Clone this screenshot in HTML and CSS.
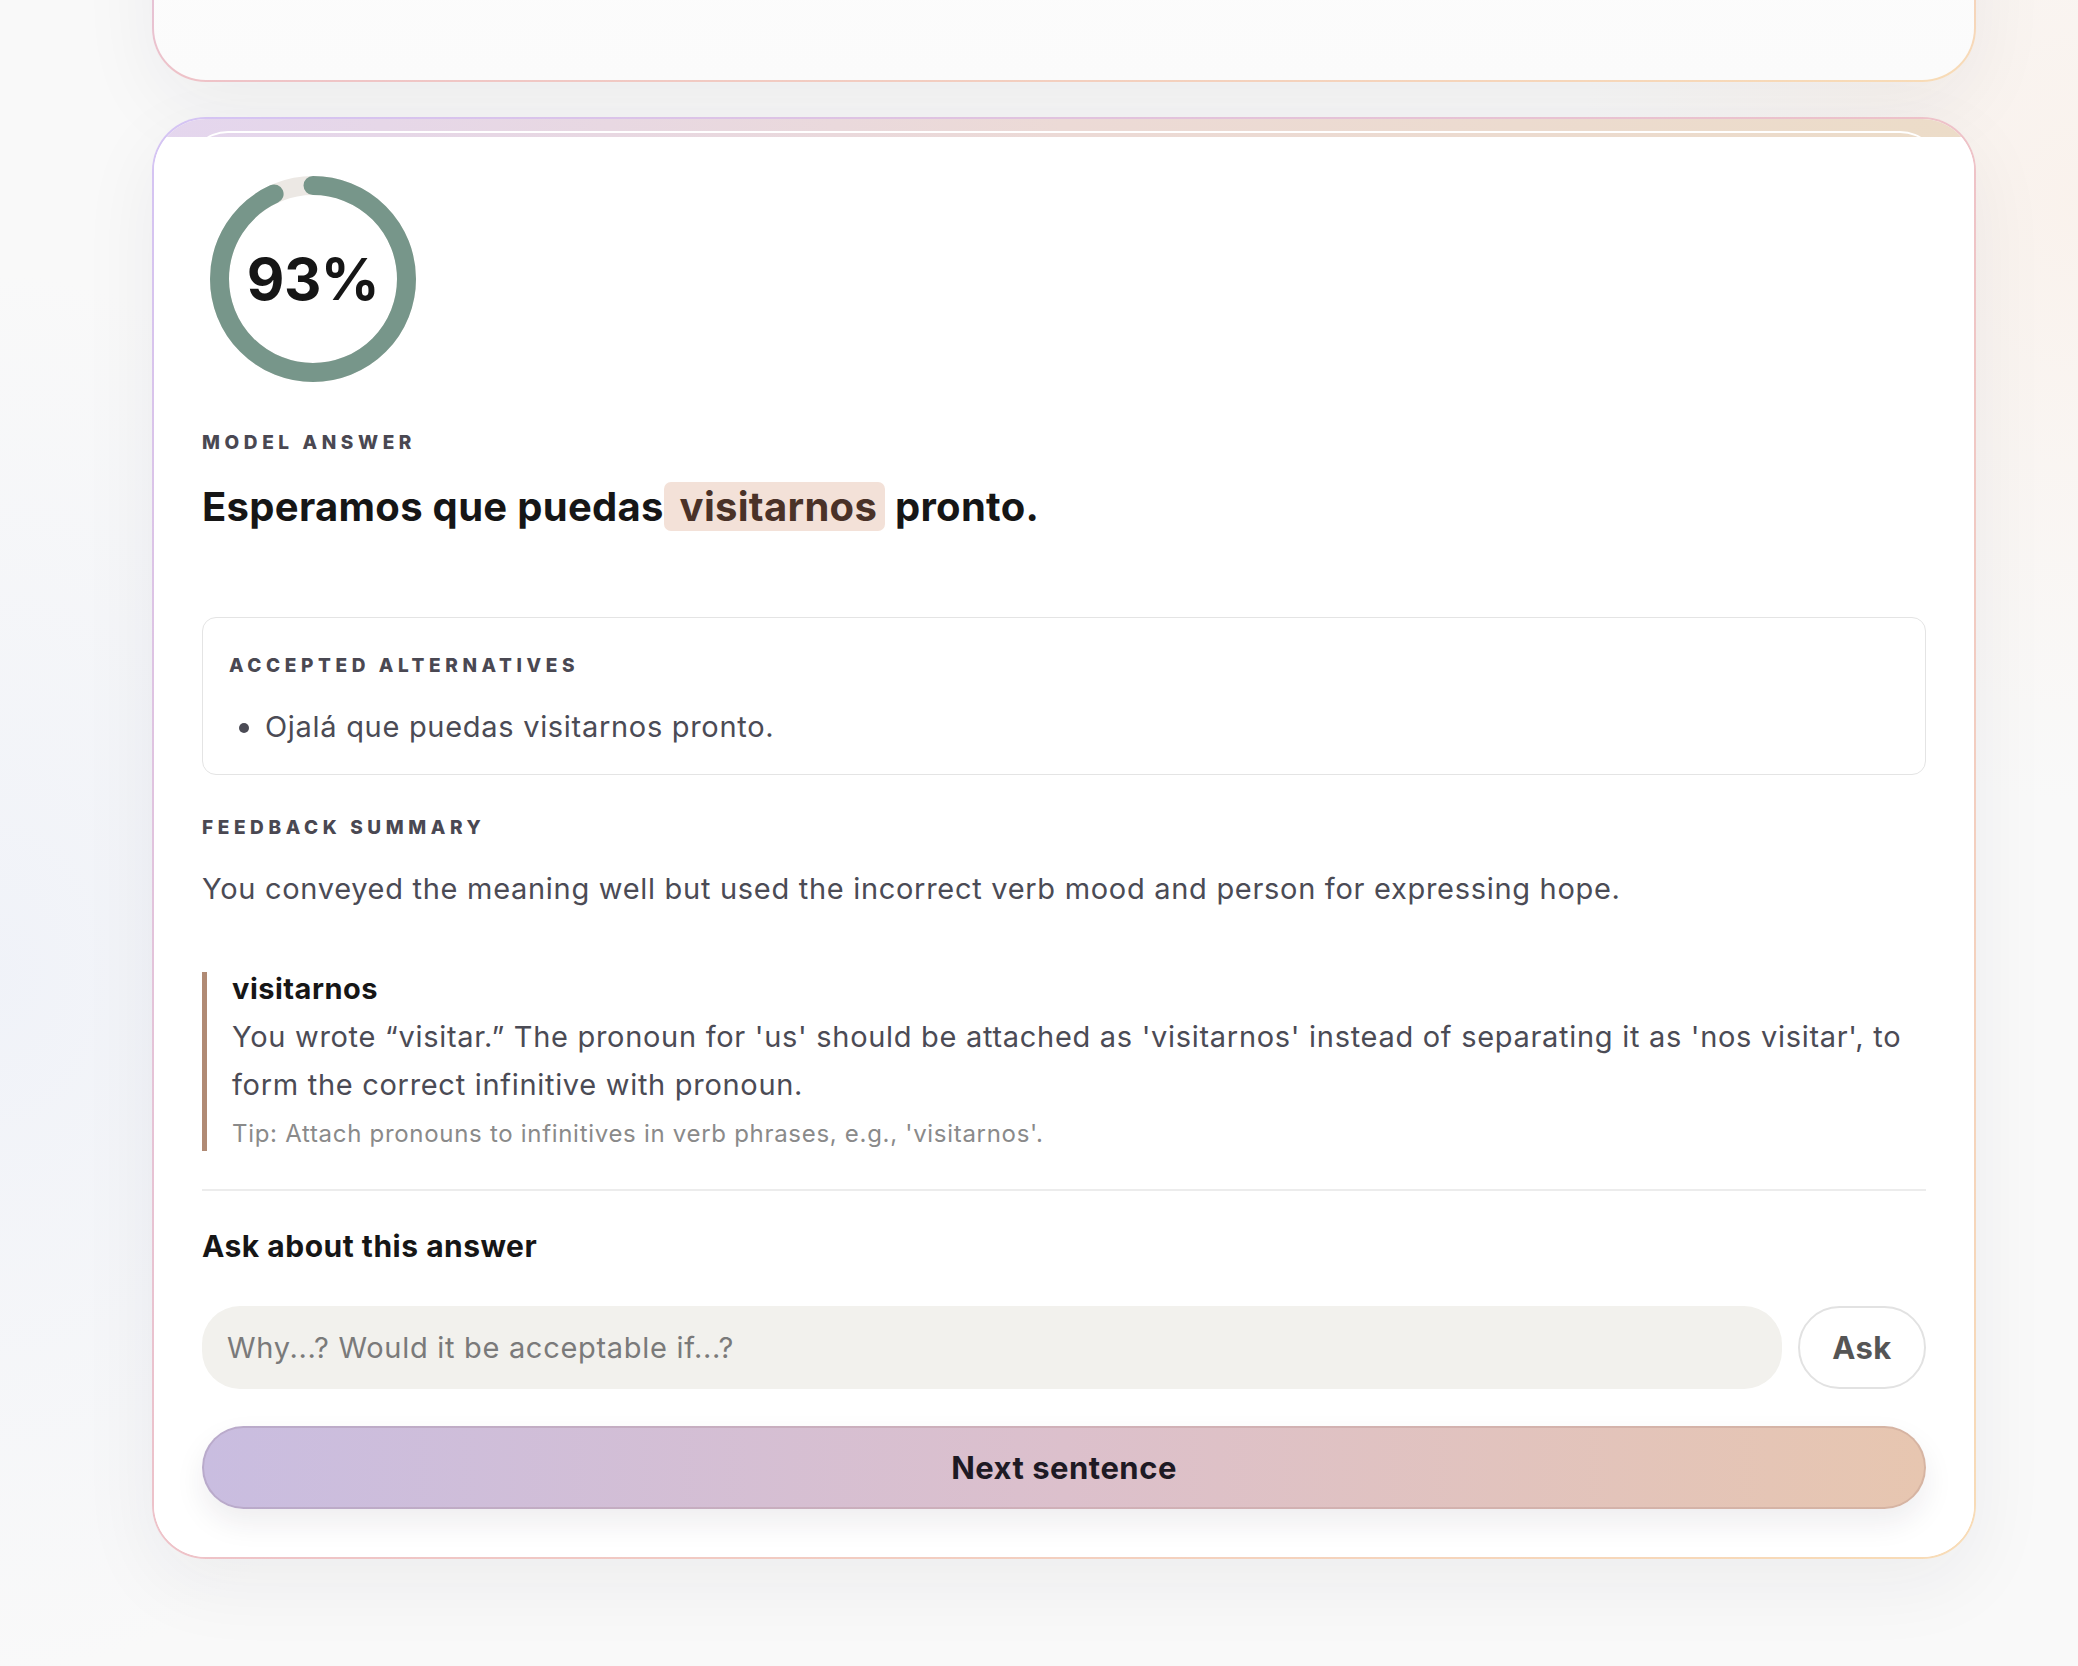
FILE: index.html
```html
<!DOCTYPE html>
<html lang="en">
<head>
    <meta charset="UTF-8">
    <meta name="viewport" content="width=device-width, initial-scale=1.0">
    <title>Translation Practice</title>
    <link rel="stylesheet" href="styles.css">
</head>
<body>
    <main class="page">
        <!-- previous exercise card, mostly scrolled away -->
        <section class="card card-prev"></section>

        <section class="card card-result">
            <div class="card-band"><span class="band-line"></span></div>
            <div class="sheet">
                <div class="score">
                    <svg class="score-ring" width="206" height="206" viewBox="0 0 206 206">
                        <circle cx="103" cy="103" r="93.5" fill="none" stroke="#ece8e4" stroke-width="19"/>
                        <circle cx="103" cy="103" r="93.5" fill="none" stroke="#77968a" stroke-width="19"
                                stroke-linecap="round" stroke-dasharray="546.4 587.5"
                                transform="rotate(-90 103 103)"/>
                    </svg>
                    <span class="score-value">93%</span>
                </div>

                <h4 class="label">Model answer</h4>
                <p class="model-answer">Esperamos que puedas<mark class="hl"> visitarnos</mark> pronto.</p>

                <div class="alternatives">
                    <h4 class="label">Accepted alternatives</h4>
                    <ul>
                        <li>Ojalá que puedas visitarnos pronto.</li>
                    </ul>
                </div>

                <h4 class="label">Feedback summary</h4>
                <p class="summary">You conveyed the meaning well but used the incorrect verb mood and person for expressing hope.</p>

                <div class="issue">
                    <div class="issue-word">visitarnos</div>
                    <p class="issue-text">You wrote “visitar.” The pronoun for 'us' should be attached as 'visitarnos' instead of separating it as 'nos visitar', to form the correct infinitive with pronoun.</p>
                    <div class="issue-tip">Tip: Attach pronouns to infinitives in verb phrases, e.g., 'visitarnos'.</div>
                </div>

                <hr class="divider">

                <h3 class="ask-title">Ask about this answer</h3>
                <form class="ask-form">
                    <input type="text" class="ask-input" placeholder="Why...? Would it be acceptable if...?">
                    <button type="button" class="ask-btn">Ask</button>
                </form>

                <button type="button" class="next-btn">Next sentence</button>
            </div>
        </section>
    </main>
</body>
</html>
```

FILE: styles.css
```css
body {
    font-family: 'Inter', 'Noto Sans', sans-serif;
    margin: 0;
    padding: 0;
    color: #1a1a1a;
    background-color: #f9f9f9;
    background-image:
        radial-gradient(ellipse 500px 700px at 0% 58%, rgba(234, 238, 248, 0.6), transparent),
        radial-gradient(ellipse 500px 600px at 100% 12%, rgba(250, 236, 226, 0.55), transparent);
    min-height: 1666px;
    overflow: hidden;
}
.page {
    padding: 0 102px 120px 152px;
}
.card {
    border: 2px solid transparent;
    border-radius: 54px;
    background:
        linear-gradient(#fff, #fff) padding-box,
        linear-gradient(to bottom right, #d4c4f4, #eec2c8 50%, #f8dcb6) border-box;
    box-shadow: 0 24px 80px rgba(40, 30, 50, 0.06);
}
.card-prev {
    margin-top: -200px;
    height: 278px;
    background:
        linear-gradient(#fdfdfd, #fbfbfb) padding-box,
        linear-gradient(to bottom right, #d4c4f4, #eec2c8 50%, #f8dcb6) border-box;
}
.card-result {
    margin-top: 35px;
    overflow: hidden;
}
.card-band {
    height: 18px;
    background: linear-gradient(90deg, #e4d6ee, #ecdad6 50%, #ecdcc8);
    overflow: hidden;
    padding: 12px 34px 0;
    box-sizing: border-box;
}
.band-line {
    display: block;
    height: 40px;
    border-top: 2px solid #fff;
    border-radius: 40px 40px 0 0;
}
.sheet {
    background: #fff;
    padding: 39px 48px 48px;
}
.score {
    display: grid;
    place-items: center;
    width: 206px;
    height: 206px;
    margin-left: 8px;
}
.score > * {
    grid-area: 1 / 1;
}
.score-value {
    font-size: 58px;
    font-weight: 700;
    color: #161616;
    letter-spacing: -0.5px;
}
.label {
    margin: 0;
    font-size: 19px;
    line-height: 22px;
    font-weight: 800;
    text-transform: uppercase;
    letter-spacing: 4.6px;
    color: #4a4852;
}
.score + .label {
    margin-top: 50px;
}
.model-answer {
    margin: 28px 0 0;
    font-size: 40px;
    line-height: 49px;
    font-weight: 700;
    letter-spacing: 0.3px;
    color: #161616;
}
.hl {
    background-color: #f3e1d8;
    color: #4a3228;
    border-radius: 7px;
    padding: 0 8px 0 6px;
}
.alternatives {
    margin-top: 86px;
    border: 1px solid #e4e4e4;
    border-radius: 14px;
    padding: 37px 26px 26px;
}
.alternatives ul {
    margin: 28px 0 0;
    padding-left: 36px;
}
.alternatives li {
    font-size: 29px;
    line-height: 42px;
    letter-spacing: 0.7px;
    color: #4b4b55;
}
.alternatives li::marker {
    font-size: 30px;
}
.alternatives + .label {
    margin-top: 42px;
}
.summary {
    margin: 29px 0 0;
    font-size: 29px;
    line-height: 42px;
    letter-spacing: 0.7px;
    color: #4b4b55;
}
.issue {
    margin-top: 62px;
    border-left: 5px solid #b08a74;
    padding-left: 25px;
    padding-bottom: 2px;
}
.issue-word {
    font-size: 29px;
    line-height: 34px;
    font-weight: 700;
    letter-spacing: 0.5px;
    color: #161616;
}
.issue-text {
    margin: 7px 0 0;
    font-size: 29px;
    line-height: 48px;
    letter-spacing: 0.7px;
    color: #4b4b55;
}
.issue-tip {
    margin-top: 10px;
    font-size: 24px;
    line-height: 30px;
    letter-spacing: 0.7px;
    color: #8a8a8a;
}
.divider {
    margin: 38px 0 0;
    border: none;
    border-top: 2px solid #ececec;
}
.ask-title {
    margin: 38px 0 0;
    font-size: 30px;
    line-height: 34px;
    font-weight: 700;
    letter-spacing: 0.5px;
    color: #161616;
}
.ask-form {
    display: flex;
    gap: 16px;
    margin-top: 43px;
}
.ask-input {
    flex: 1;
    height: 83px;
    box-sizing: border-box;
    border: none;
    outline: none;
    border-radius: 38px;
    background-color: #f2f1ed;
    padding: 0 25px;
    font-family: inherit;
    font-size: 29px;
    letter-spacing: 0.7px;
    color: #333;
}
.ask-input::placeholder {
    color: #7a7a7a;
}
.ask-btn {
    width: 128px;
    height: 83px;
    border: 2px solid #e2e2e2;
    border-radius: 42px;
    background: #fff;
    font-family: inherit;
    font-size: 31px;
    font-weight: 700;
    letter-spacing: 0.5px;
    color: #555;
    cursor: pointer;
}
.next-btn {
    display: block;
    width: 100%;
    height: 83px;
    margin-top: 37px;
    border: 2px solid transparent;
    border-radius: 42px;
    background:
        linear-gradient(90deg, #c9bde0, #dcc0cc 50%, #e7c6b0) padding-box,
        linear-gradient(90deg, #b9aacb, #d0b0b8 50%, #d6b4a2) border-box;
    box-shadow: 0 14px 30px rgba(40, 30, 50, 0.08);
    font-family: inherit;
    font-size: 31px;
    font-weight: 700;
    letter-spacing: 0.5px;
    color: #1e1a24;
    cursor: pointer;
}
```
